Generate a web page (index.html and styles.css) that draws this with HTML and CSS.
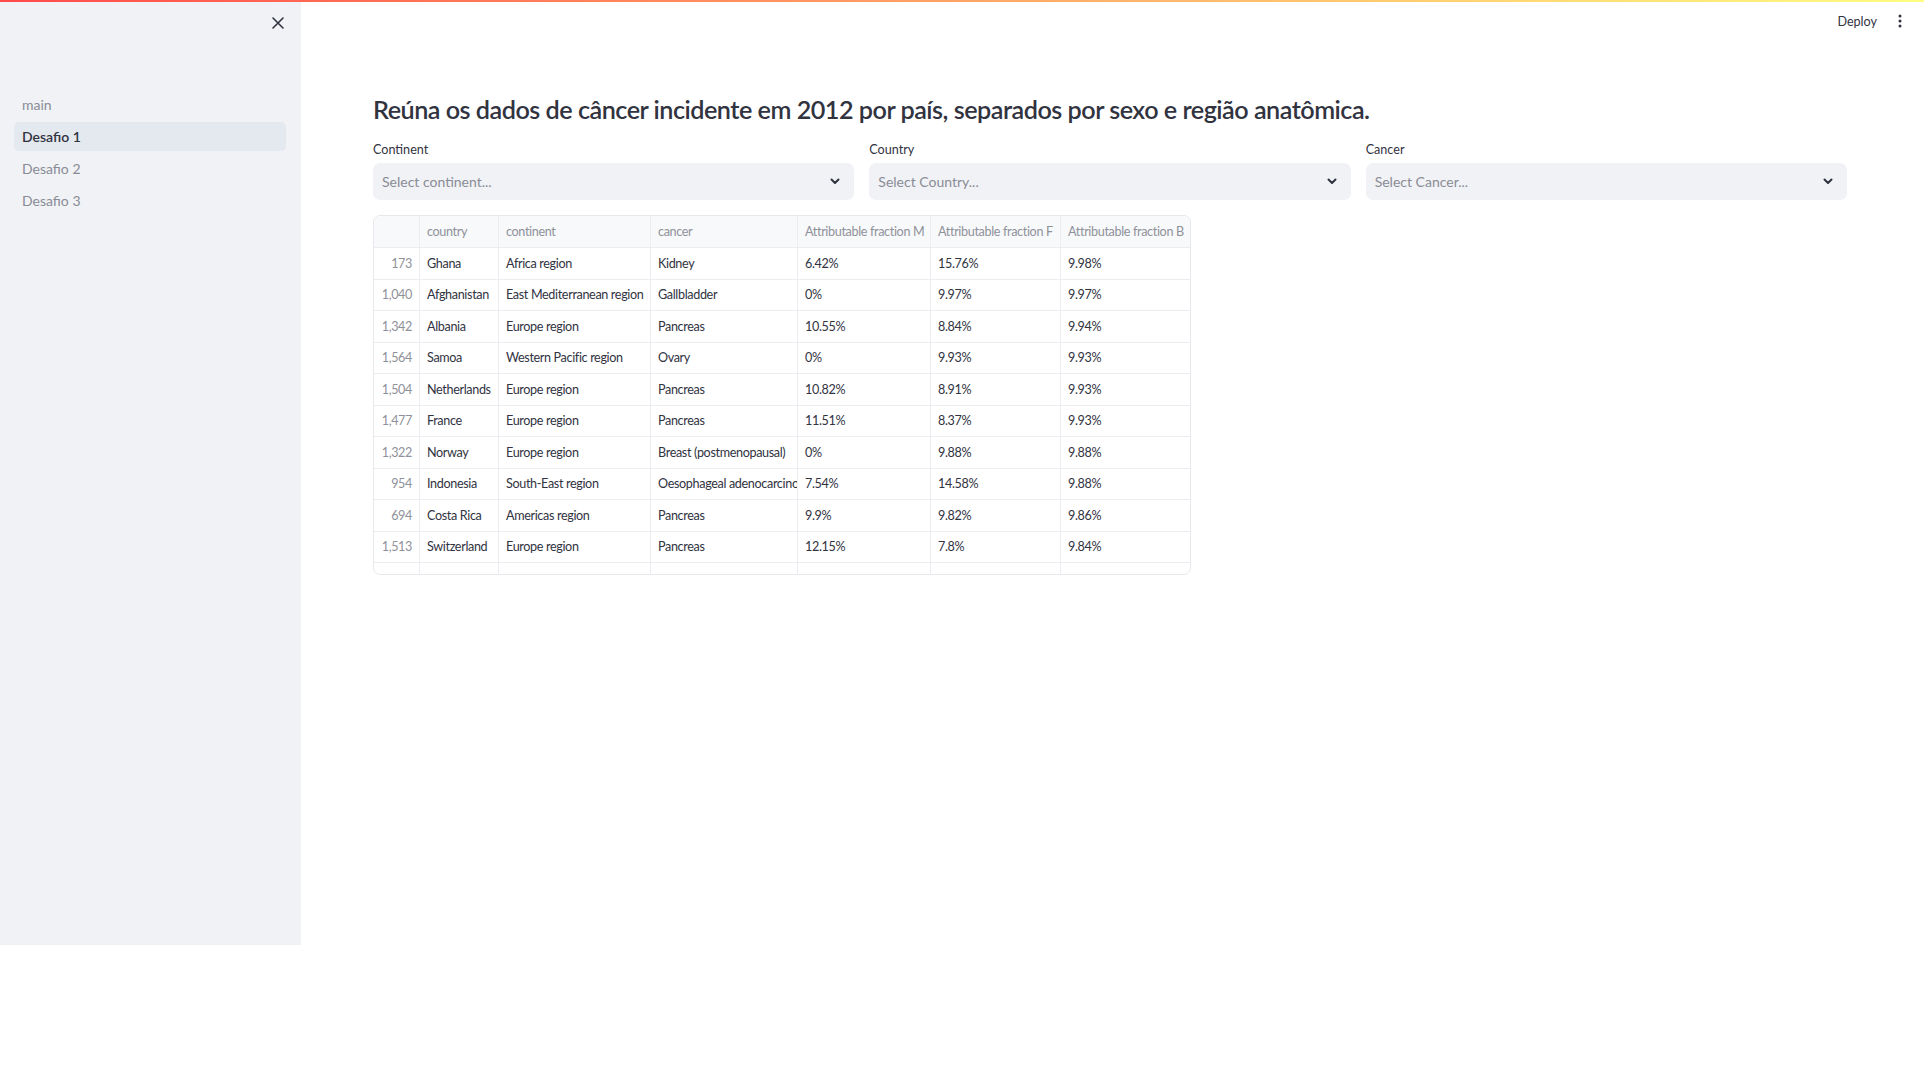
FILE: index.html
```html
<!DOCTYPE html>
<html lang="pt">
<head>
<meta charset="utf-8">
<title>Desafio 1</title>
<link rel="stylesheet" href="styles.css">
</head>
<body>
<div class="decoration"></div>
<div class="app">
  <aside class="sidebar">
    <div class="sb-top">
      <button class="close" aria-label="Close sidebar">
        <svg width="12" height="12" viewBox="0 0 12 12"><path d="M1 1 L11 11 M11 1 L1 11" stroke="#31333f" stroke-width="1.6" stroke-linecap="round" fill="none"/></svg>
      </button>
    </div>
    <nav class="nav">
      <a class="nav-item">main</a>
      <a class="nav-item active">Desafio 1</a>
      <a class="nav-item">Desafio 2</a>
      <a class="nav-item">Desafio 3</a>
    </nav>
  </aside>
  <main class="main">
    <header class="topbar">
      <span class="deploy">Deploy</span>
      <span class="menu">
        <svg width="4" height="14" viewBox="0 0 4 14"><circle cx="2" cy="2" r="1.5" fill="#31333f"/><circle cx="2" cy="7" r="1.5" fill="#31333f"/><circle cx="2" cy="12" r="1.5" fill="#31333f"/></svg>
      </span>
    </header>
    <section class="content">
      <h3 class="title">Reúna os dados de câncer incidente em 2012 por país, separados por sexo e região anatômica.</h3>
      <div class="filters">
        <div class="field">
          <label class="label">Continent</label>
          <div class="select"><span>Select continent...</span><svg class="chev" width="10" height="7" viewBox="0 0 10 7"><path d="M1.5 1.5 L5 5 L8.5 1.5" stroke="#31333f" stroke-width="2" fill="none" stroke-linecap="round" stroke-linejoin="round"/></svg></div>
        </div>
        <div class="field">
          <label class="label">Country</label>
          <div class="select"><span>Select Country...</span><svg class="chev" width="10" height="7" viewBox="0 0 10 7"><path d="M1.5 1.5 L5 5 L8.5 1.5" stroke="#31333f" stroke-width="2" fill="none" stroke-linecap="round" stroke-linejoin="round"/></svg></div>
        </div>
        <div class="field">
          <label class="label">Cancer</label>
          <div class="select"><span>Select Cancer...</span><svg class="chev" width="10" height="7" viewBox="0 0 10 7"><path d="M1.5 1.5 L5 5 L8.5 1.5" stroke="#31333f" stroke-width="2" fill="none" stroke-linecap="round" stroke-linejoin="round"/></svg></div>
        </div>
      </div>
      <div class="grid">
        <div class="row head">
          <div class="c idx"></div><div class="c">country</div><div class="c">continent</div><div class="c">cancer</div><div class="c">Attributable fraction M</div><div class="c">Attributable fraction F</div><div class="c">Attributable fraction B</div>
        </div>
        <div class="row"><div class="c idx">173</div><div class="c">Ghana</div><div class="c">Africa region</div><div class="c">Kidney</div><div class="c">6.42%</div><div class="c">15.76%</div><div class="c">9.98%</div></div>
        <div class="row"><div class="c idx">1,040</div><div class="c">Afghanistan</div><div class="c">East Mediterranean region</div><div class="c">Gallbladder</div><div class="c">0%</div><div class="c">9.97%</div><div class="c">9.97%</div></div>
        <div class="row"><div class="c idx">1,342</div><div class="c">Albania</div><div class="c">Europe region</div><div class="c">Pancreas</div><div class="c">10.55%</div><div class="c">8.84%</div><div class="c">9.94%</div></div>
        <div class="row"><div class="c idx">1,564</div><div class="c">Samoa</div><div class="c">Western Pacific region</div><div class="c">Ovary</div><div class="c">0%</div><div class="c">9.93%</div><div class="c">9.93%</div></div>
        <div class="row"><div class="c idx">1,504</div><div class="c">Netherlands</div><div class="c">Europe region</div><div class="c">Pancreas</div><div class="c">10.82%</div><div class="c">8.91%</div><div class="c">9.93%</div></div>
        <div class="row"><div class="c idx">1,477</div><div class="c">France</div><div class="c">Europe region</div><div class="c">Pancreas</div><div class="c">11.51%</div><div class="c">8.37%</div><div class="c">9.93%</div></div>
        <div class="row"><div class="c idx">1,322</div><div class="c">Norway</div><div class="c">Europe region</div><div class="c">Breast (postmenopausal)</div><div class="c">0%</div><div class="c">9.88%</div><div class="c">9.88%</div></div>
        <div class="row"><div class="c idx">954</div><div class="c">Indonesia</div><div class="c">South-East region</div><div class="c">Oesophageal adenocarcino</div><div class="c">7.54%</div><div class="c">14.58%</div><div class="c">9.88%</div></div>
        <div class="row"><div class="c idx">694</div><div class="c">Costa Rica</div><div class="c">Americas region</div><div class="c">Pancreas</div><div class="c">9.9%</div><div class="c">9.82%</div><div class="c">9.86%</div></div>
        <div class="row"><div class="c idx">1,513</div><div class="c">Switzerland</div><div class="c">Europe region</div><div class="c">Pancreas</div><div class="c">12.15%</div><div class="c">7.8%</div><div class="c">9.84%</div></div>
        <div class="row partial"><div class="c idx"></div><div class="c"></div><div class="c"></div><div class="c"></div><div class="c"></div><div class="c"></div><div class="c"></div></div>
      </div>
    </section>
  </main>
</div>
</body>
</html>
```

FILE: styles.css
```css
* { box-sizing: border-box; }
html, body { margin: 0; padding: 0; background: #ffffff; }
body {
  font-family: "Lato", "Source Sans Pro", "Liberation Sans", sans-serif;
  color: #31333f;
  width: 1924px;
  height: 1080px;
  overflow: hidden;
  position: relative;
}
.decoration {
  position: absolute;
  top: 0; left: 0; right: 0;
  height: 2px;
  background: linear-gradient(90deg, #ff4b4b, #fffd80);
  z-index: 10;
}
.app { display: flex; align-items: flex-start; }
.sidebar {
  width: 301px;
  height: 945px;
  flex-shrink: 0;
  background: #f0f2f6;
}
.sb-top {
  height: 46px;
  display: flex;
  justify-content: flex-end;
  align-items: center;
  padding-right: 17px;
}
.close {
  border: 0; background: transparent; padding: 0;
  width: 12px; height: 12px; display: flex;
}
.nav {
  display: flex;
  flex-direction: column;
  gap: 3px;
  padding: 44px 15px 0 14px;
}
.nav-item {
  height: 29px;
  line-height: 29px;
  padding-left: 8px;
  font-size: 14px;
  color: #8a8c95;
  border-radius: 5px;
}
.nav-item.active {
  background: #e4e8ef;
  color: #31333f;
  font-weight: 600;
}
.main { flex: 1; min-width: 0; }
.topbar {
  height: 42px;
  display: flex;
  justify-content: flex-end;
  align-items: center;
  gap: 21px;
  padding-right: 22px;
}
.deploy { font-size: 12.6px; color: #31333f; }
.menu { display: flex; }
.content { padding: 52px 77px 0 72px; }
.title {
  margin: 0;
  font-size: 25.2px;
  line-height: 30px;
  font-weight: 600;
  letter-spacing: -0.5px;
  color: #31333f;
}
.filters {
  display: grid;
  grid-template-columns: repeat(3, 1fr);
  column-gap: 15px;
  margin-top: 17px;
}
.label {
  display: block;
  font-size: 12.6px;
  line-height: 18px;
  margin-bottom: 4px;
  color: #31333f;
}
.select {
  height: 37px;
  background: #f0f2f6;
  border-radius: 7px;
  display: flex;
  align-items: center;
  justify-content: space-between;
  padding: 0 14px 0 9px;
  font-size: 14px;
  color: #8a8c95;
}
.grid {
  margin-top: 15px;
  width: 818px;
  height: 360px;
  border: 1px solid #e6e8ec;
  border-radius: 7px;
  overflow: hidden;
}
.row {
  display: grid;
  grid-template-columns: 46px 79px 152px 147px 133px 130px 129px;
  height: 31.5px;
  border-bottom: 1px solid #ebedf0;
}
.row.head { height: 32px; background: #f8f9fb; }
.row.head .c { color: #8f919a; }
.row.partial { border-bottom: 0; height: 14px; }
.c {
  border-right: 1px solid #ebedf0;
  padding: 0 7px;
  font-size: 12.6px;
  letter-spacing: -0.35px;
  color: #31333f;
  white-space: nowrap;
  overflow: hidden;
  display: flex;
  align-items: center;
}
.c:last-child { border-right: 0; }
.c.idx { justify-content: flex-end; color: #8f919a; }
```
